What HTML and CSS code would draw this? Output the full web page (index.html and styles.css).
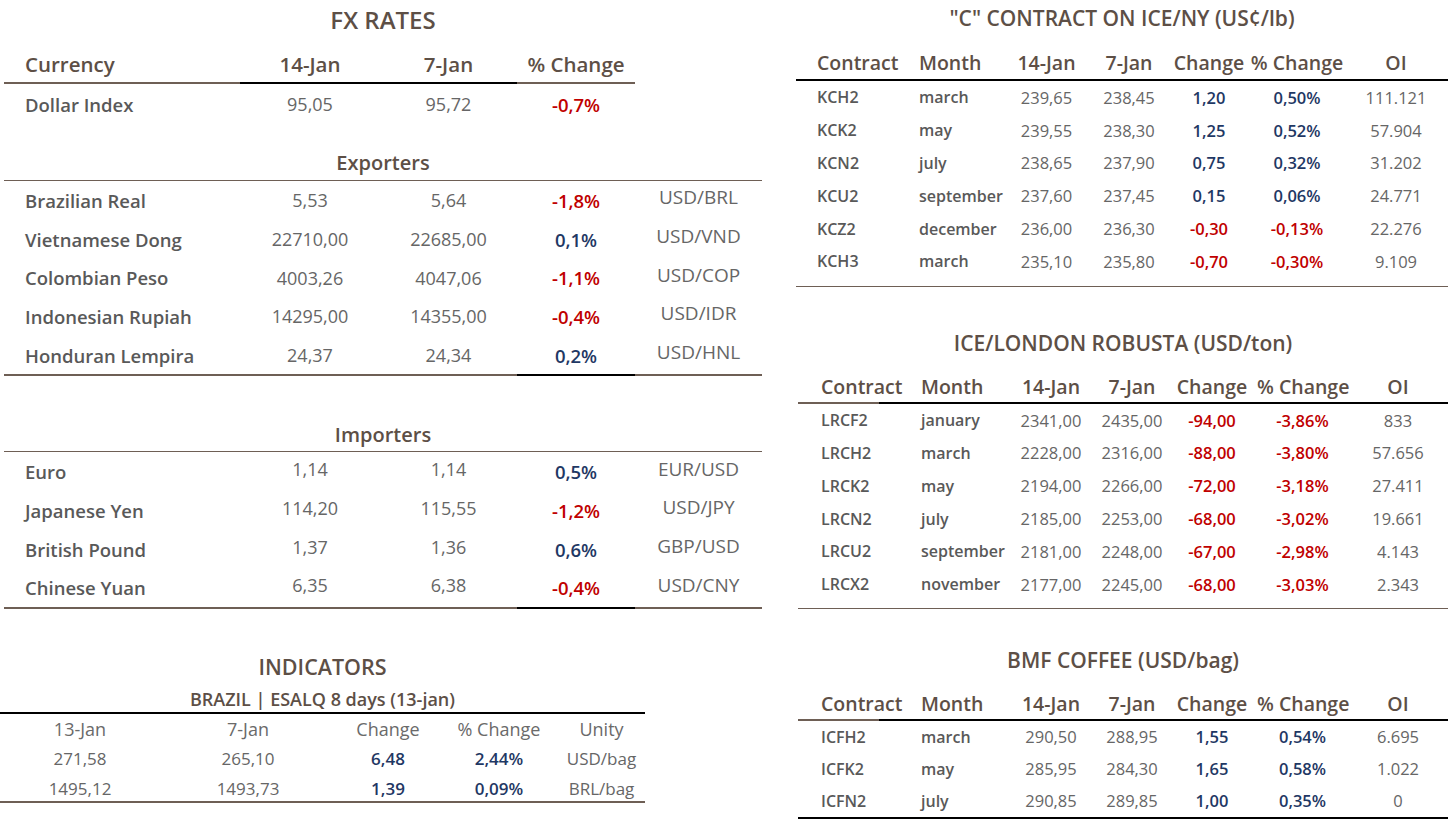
FILE: index.html
```html
<!DOCTYPE html>
<html lang="en">
<head>
<meta charset="utf-8">
<title>Market Rates</title>
<link rel="stylesheet" href="styles.css">
</head>
<body>
<div class="page">
  <div class="left">
    <section class="fx">
      <h1 class="title fx-title">FX RATES</h1>
      <div class="fx-row fx-head">
        <div class="c lbl b-brown">Currency</div>
        <div class="c b-black">14-Jan</div>
        <div class="c b-black">7-Jan</div>
        <div class="c b-brown">% Change</div>
        <div class="c"></div>
      </div>
      <div class="fx-row fx-first">
        <div class="c lbl">Dollar Index</div>
        <div class="c val">95,05</div>
        <div class="c val">95,72</div>
        <div class="c neg">-0,7%</div>
        <div class="c"></div>
      </div>

      <h2 class="group">Exporters</h2>
      <div class="fx-row">
        <div class="c lbl">Brazilian Real</div>
        <div class="c val">5,53</div>
        <div class="c val">5,64</div>
        <div class="c neg">-1,8%</div>
        <div class="c unit">USD/BRL</div>
      </div>
      <div class="fx-row">
        <div class="c lbl">Vietnamese Dong</div>
        <div class="c val">22710,00</div>
        <div class="c val">22685,00</div>
        <div class="c pos">0,1%</div>
        <div class="c unit">USD/VND</div>
      </div>
      <div class="fx-row">
        <div class="c lbl">Colombian Peso</div>
        <div class="c val">4003,26</div>
        <div class="c val">4047,06</div>
        <div class="c neg">-1,1%</div>
        <div class="c unit">USD/COP</div>
      </div>
      <div class="fx-row">
        <div class="c lbl">Indonesian Rupiah</div>
        <div class="c val">14295,00</div>
        <div class="c val">14355,00</div>
        <div class="c neg">-0,4%</div>
        <div class="c unit">USD/IDR</div>
      </div>
      <div class="fx-row fx-last">
        <div class="c lbl">Honduran Lempira</div>
        <div class="c val">24,37</div>
        <div class="c val">24,34</div>
        <div class="c pos b-black">0,2%</div>
        <div class="c unit">USD/HNL</div>
      </div>

      <h2 class="group group-imp">Importers</h2>
      <div class="fx-row">
        <div class="c lbl">Euro</div>
        <div class="c val up">1,14</div>
        <div class="c val up">1,14</div>
        <div class="c pos">0,5%</div>
        <div class="c unit">EUR/USD</div>
      </div>
      <div class="fx-row">
        <div class="c lbl">Japanese Yen</div>
        <div class="c val up">114,20</div>
        <div class="c val up">115,55</div>
        <div class="c neg">-1,2%</div>
        <div class="c unit">USD/JPY</div>
      </div>
      <div class="fx-row">
        <div class="c lbl">British Pound</div>
        <div class="c val up">1,37</div>
        <div class="c val up">1,36</div>
        <div class="c pos">0,6%</div>
        <div class="c unit">GBP/USD</div>
      </div>
      <div class="fx-row fx-last">
        <div class="c lbl">Chinese Yuan</div>
        <div class="c val up">6,35</div>
        <div class="c val up">6,38</div>
        <div class="c neg b-black">-0,4%</div>
        <div class="c unit">USD/CNY</div>
      </div>
    </section>

    <section class="ind">
      <h1 class="title ind-title">INDICATORS</h1>
      <h3 class="ind-sub">BRAZIL | ESALQ 8 days (13-jan)</h3>
      <div class="ind-row ind-head">
        <div>13-Jan</div>
        <div>7-Jan</div>
        <div>Change</div>
        <div>% Change</div>
        <div>Unity</div>
      </div>
      <div class="ind-row">
        <div>271,58</div>
        <div>265,10</div>
        <div class="pos">6,48</div>
        <div class="pos">2,44%</div>
        <div>USD/bag</div>
      </div>
      <div class="ind-row ind-last">
        <div>1495,12</div>
        <div>1493,73</div>
        <div class="pos">1,39</div>
        <div class="pos">0,09%</div>
        <div>BRL/bag</div>
      </div>
    </section>
  </div>

  <div class="right">
    <section class="fut fut-ny">
      <h1 class="title fut-title">"C" CONTRACT ON ICE/NY (US¢/lb)</h1>
      <div class="f-row f-head">
        <div class="l">Contract</div><div class="l m">Month</div><div>14-Jan</div><div>7-Jan</div><div>Change</div><div>% Change</div><div>OI</div>
      </div>
      <div class="f-body">
        <div class="f-row"><div class="l k">KCH2</div><div class="l m k">march</div><div>239,65</div><div>238,45</div><div class="pos">1,20</div><div class="pos">0,50%</div><div>111.121</div></div>
        <div class="f-row"><div class="l k">KCK2</div><div class="l m k">may</div><div>239,55</div><div>238,30</div><div class="pos">1,25</div><div class="pos">0,52%</div><div>57.904</div></div>
        <div class="f-row"><div class="l k">KCN2</div><div class="l m k">july</div><div>238,65</div><div>237,90</div><div class="pos">0,75</div><div class="pos">0,32%</div><div>31.202</div></div>
        <div class="f-row"><div class="l k">KCU2</div><div class="l m k">september</div><div>237,60</div><div>237,45</div><div class="pos">0,15</div><div class="pos">0,06%</div><div>24.771</div></div>
        <div class="f-row"><div class="l k">KCZ2</div><div class="l m k">december</div><div>236,00</div><div>236,30</div><div class="neg">-0,30</div><div class="neg">-0,13%</div><div>22.276</div></div>
        <div class="f-row"><div class="l k">KCH3</div><div class="l m k">march</div><div>235,10</div><div>235,80</div><div class="neg">-0,70</div><div class="neg">-0,30%</div><div>9.109</div></div>
      </div>
    </section>

    <section class="fut fut-ldn">
      <h1 class="title fut-title">ICE/LONDON ROBUSTA (USD/ton)</h1>
      <div class="f-row f-head split">
        <div class="l">Contract</div><div class="l m">Month</div><div>14-Jan</div><div>7-Jan</div><div>Change</div><div>% Change</div><div>OI</div>
      </div>
      <div class="f-body">
        <div class="f-row"><div class="l k">LRCF2</div><div class="l m k">january</div><div>2341,00</div><div>2435,00</div><div class="neg">-94,00</div><div class="neg">-3,86%</div><div>833</div></div>
        <div class="f-row"><div class="l k">LRCH2</div><div class="l m k">march</div><div>2228,00</div><div>2316,00</div><div class="neg">-88,00</div><div class="neg">-3,80%</div><div>57.656</div></div>
        <div class="f-row"><div class="l k">LRCK2</div><div class="l m k">may</div><div>2194,00</div><div>2266,00</div><div class="neg">-72,00</div><div class="neg">-3,18%</div><div>27.411</div></div>
        <div class="f-row"><div class="l k">LRCN2</div><div class="l m k">july</div><div>2185,00</div><div>2253,00</div><div class="neg">-68,00</div><div class="neg">-3,02%</div><div>19.661</div></div>
        <div class="f-row"><div class="l k">LRCU2</div><div class="l m k">september</div><div>2181,00</div><div>2248,00</div><div class="neg">-67,00</div><div class="neg">-2,98%</div><div>4.143</div></div>
        <div class="f-row"><div class="l k">LRCX2</div><div class="l m k">november</div><div>2177,00</div><div>2245,00</div><div class="neg">-68,00</div><div class="neg">-3,03%</div><div>2.343</div></div>
      </div>
    </section>

    <section class="fut fut-bmf">
      <h1 class="title fut-title">BMF COFFEE (USD/bag)</h1>
      <div class="f-row f-head split">
        <div class="l">Contract</div><div class="l m">Month</div><div>14-Jan</div><div>7-Jan</div><div>Change</div><div>% Change</div><div>OI</div>
      </div>
      <div class="f-body">
        <div class="f-row"><div class="l k">ICFH2</div><div class="l m k">march</div><div>290,50</div><div>288,95</div><div class="pos">1,55</div><div class="pos">0,54%</div><div>6.695</div></div>
        <div class="f-row"><div class="l k">ICFK2</div><div class="l m k">may</div><div>285,95</div><div>284,30</div><div class="pos">1,65</div><div class="pos">0,58%</div><div>1.022</div></div>
        <div class="f-row"><div class="l k">ICFN2</div><div class="l m k">july</div><div>290,85</div><div>289,85</div><div class="pos">1,00</div><div class="pos">0,35%</div><div>0</div></div>
      </div>
    </section>
  </div>
</div>
</body>
</html>
```

FILE: styles.css
```css
* { box-sizing: border-box; }

html, body {
  margin: 0;
  padding: 0;
  background: #ffffff;
}

body {
  font-family: "Open Sans", "Lato", "Liberation Sans", sans-serif;
  color: #595959;
  width: 1449px;
  height: 819px;
  overflow: hidden;
}

.page {
  display: flex;
  gap: 34px;
}

.left { width: 762px; flex: none; }
.right { width: 652px; flex: none; }

.title {
  margin: 0;
  font-weight: 600;
  color: #5d4f46;
  text-align: center;
  white-space: nowrap;
}

.neg { color: #c00000; font-weight: 600; }
.pos { color: #1f3864; font-weight: 600; }

/* ---------- FX RATES ---------- */
.fx { margin-left: 4px; width: 758px; }

.fx-title {
  height: 40px;
  line-height: 40px;
  font-size: 24px;
}

.fx-row {
  display: grid;
  grid-template-columns: 236px 140px 137px 118px 127px;
  height: 38.7px;
}

.fx-row .c {
  display: flex;
  align-items: center;
  justify-content: center;
  font-size: 18px;
  white-space: nowrap;
}

.fx-row .lbl {
  justify-content: flex-start;
  padding-left: 21px;
  font-weight: 600;
  font-size: 18.5px;
  color: #595959;
}

.fx-row .neg, .fx-row .pos { font-size: 18.5px; }

.fx-row .val { color: #666666; }
.fx-row .up { padding-bottom: 5px; }
.fx-row .unit { color: #666666; padding-bottom: 6px; font-size: 19px; }

.fx-head {
  margin-top: 8px;
  height: 36px;
}

.fx-head .c {
  font-size: 20.5px;
  font-weight: 600;
  color: #5d4f46;
  padding-bottom: 2px;
}

.fx-head .lbl { color: #5d4f46; font-size: 20.5px; }

.b-brown { border-bottom: 2px solid #6e5f55; }
.b-black { border-bottom: 2px solid #000000; }

.fx-first { height: 40px; }

.group {
  margin: 22px 0 0;
  height: 35px;
  line-height: 34px;
  text-align: center;
  font-size: 20px;
  font-weight: 600;
  color: #5d4f46;
  border-bottom: 1px solid #6e5f55;
}

.group-imp { margin-top: 42px; height: 34px; }

.fx-last {
  height: 40.7px;
  border-bottom: 2px solid #6e5f55;
}

.fx-last .c.b-black { margin-bottom: -2px; }

/* ---------- INDICATORS ---------- */
.ind { width: 645px; }

.ind-title {
  margin-top: 43px;
  height: 30px;
  line-height: 30px;
  font-size: 21.5px;
}

.ind-sub {
  margin: 0;
  padding-top: 4px;
  height: 32px;
  line-height: 26px;
  text-align: center;
  font-size: 18px;
  font-weight: 600;
  color: #5d4f46;
  border-bottom: 2px solid #000000;
}

.ind-row {
  display: grid;
  grid-template-columns: 160px 176px 104px 118px 87px;
  height: 28px;
  align-items: center;
  text-align: center;
  font-size: 17px;
  color: #666666;
}

.ind-head { height: 30px; color: #6a6a6a; font-size: 18px; }

.ind-row .pos { color: #1f3864; }

.ind-last {
  height: 31px;
  padding-top: 4px;
  border-bottom: 2px solid #6e5f55;
}

/* ---------- FUTURES ---------- */
.fut-title {
  height: 36px;
  line-height: 36px;
  font-size: 21px;
}

.f-row {
  display: grid;
  grid-template-columns: 116px 91px 87px 78px 82px 94px 104px;
  height: 32.8px;
  align-items: center;
  text-align: center;
  font-size: 16.5px;
  color: #666666;
  white-space: nowrap;
}

.f-row .l { text-align: left; padding-left: 21px; }
.f-row .l.m { padding-left: 7px; }
.f-row .k { font-weight: 600; color: #595959; font-size: 16px; }

.f-head {
  margin-top: 10px;
  height: 35px;
  font-size: 19.5px;
  font-weight: 600;
  color: #5d4f46;
  border-bottom: 2px solid #000000;
}

.f-head .l { font-size: 19.5px; }

.f-body {
  padding-bottom: 8px;
  border-bottom: 1.5px solid #6e5f55;
}

.fut-ldn, .fut-bmf { margin-left: 2px; width: 650px; }

.fut-ldn .f-row, .fut-bmf .f-row {
  grid-template-columns: 117px 90px 92px 70px 90px 91px 100px;
}

.fut-ldn .f-row .l, .fut-bmf .f-row .l { padding-left: 23px; }
.fut-ldn .f-row .l.m, .fut-bmf .f-row .l.m { padding-left: 6px; }

.f-head.split {
  margin-top: 8px;
  border-bottom: none;
  background: linear-gradient(to right, #6e5f55 81px, #000000 81px) left bottom / 100% 2px no-repeat;
}

.fut-ldn { margin-top: 38px; }
.fut-ldn .f-body { padding-bottom: 7px; }

.fut-bmf { margin-top: 33px; }
.fut-bmf .f-body .f-row { height: 32px; }
.fut-bmf .f-body {
  padding-bottom: 0;
  border-bottom: 2px solid #000000;
}
```
